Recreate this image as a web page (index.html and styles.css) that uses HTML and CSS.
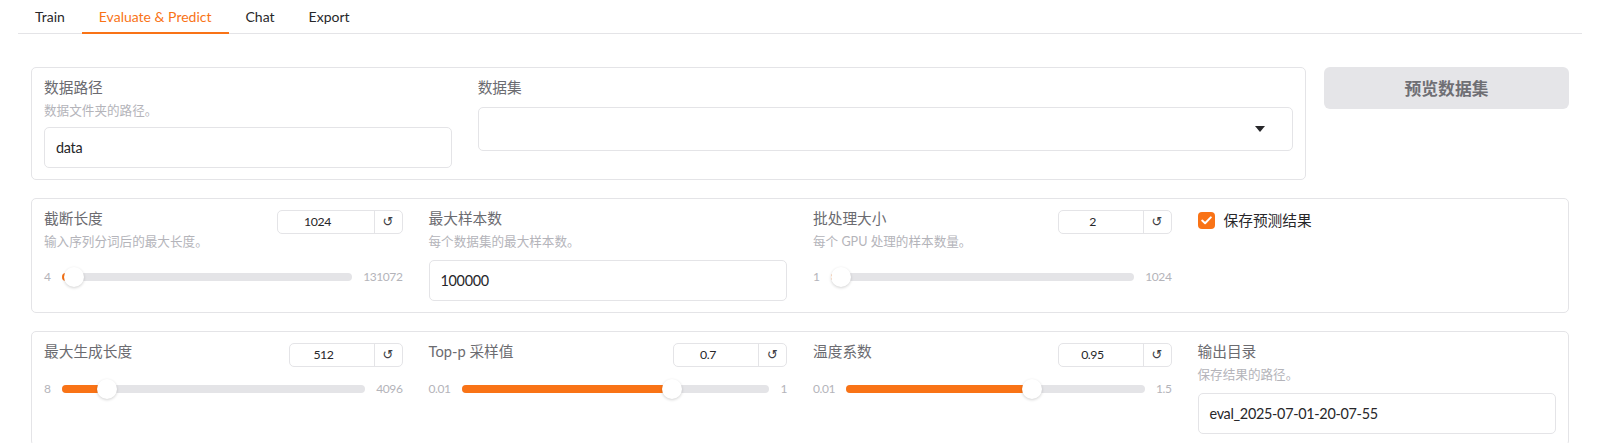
FILE: index.html
```html
<!DOCTYPE html>
<html lang="zh">
<head>
<meta charset="utf-8">
<title>Evaluate &amp; Predict</title>
<link rel="stylesheet" href="styles.css">
</head>
<body>
<div class="app">
  <nav class="tabs">
    <button class="tab">Train</button>
    <button class="tab active">Evaluate &amp; Predict</button>
    <button class="tab">Chat</button>
    <button class="tab">Export</button>
  </nav>

  <main class="panel">
    <div class="row-top">
      <section class="box grid-2">
        <div class="field">
          <div class="head">
            <div class="head-text">
              <span class="label">数据路径</span>
              <div class="info">数据文件夹的路径。</div>
            </div>
          </div>
          <div class="textbox">data</div>
        </div>
        <div class="field">
          <div class="head"><span class="label">数据集</span></div>
          <div class="dropdown">
            <svg class="caret" width="10" height="6" viewBox="0 0 10 6"><path d="M0 0 H10 L5 6 Z" fill="#27272a"/></svg>
          </div>
        </div>
      </section>
      <button class="preview-btn">预览数据集</button>
    </div>

    <section class="box grid-4">
      <div class="field">
        <div class="head">
          <div class="head-text">
            <span class="label">截断长度</span>
            <div class="info">输入序列分词后的最大长度。</div>
          </div>
          <div class="number wide"><span class="num-val">1024</span><span class="reset">↺</span></div>
        </div>
        <div class="slider after-info">
          <span class="bound">4</span>
          <div class="track" style="--f:0.0078"><div class="fill"></div><div class="thumb"></div></div>
          <span class="bound">131072</span>
        </div>
      </div>
      <div class="field">
        <div class="head">
          <div class="head-text">
            <span class="label">最大样本数</span>
            <div class="info">每个数据集的最大样本数。</div>
          </div>
        </div>
        <div class="textbox after-info">100000</div>
      </div>
      <div class="field">
        <div class="head">
          <div class="head-text">
            <span class="label">批处理大小</span>
            <div class="info">每个 GPU 处理的样本数量。</div>
          </div>
          <div class="number"><span class="num-val">2</span><span class="reset">↺</span></div>
        </div>
        <div class="slider after-info">
          <span class="bound">1</span>
          <div class="track" style="--f:0.001"><div class="fill"></div><div class="thumb"></div></div>
          <span class="bound">1024</span>
        </div>
      </div>
      <div class="field">
        <label class="check">
          <span class="checkbox">
            <svg width="11" height="9" viewBox="0 0 11 9"><path d="M1.2 4.6 L4.1 7.3 L9.8 1.4" fill="none" stroke="#fff" stroke-width="2" stroke-linecap="round" stroke-linejoin="round"/></svg>
          </span>
          <span class="check-label">保存预测结果</span>
        </label>
      </div>
    </section>

    <section class="box grid-4">
      <div class="field">
        <div class="head">
          <div class="head-text"><span class="label">最大生成长度</span></div>
          <div class="number"><span class="num-val">512</span><span class="reset">↺</span></div>
        </div>
        <div class="slider">
          <span class="bound">8</span>
          <div class="track" style="--f:0.1233"><div class="fill"></div><div class="thumb"></div></div>
          <span class="bound">4096</span>
        </div>
      </div>
      <div class="field">
        <div class="head">
          <div class="head-text"><span class="label">Top-p 采样值</span></div>
          <div class="number"><span class="num-val">0.7</span><span class="reset">↺</span></div>
        </div>
        <div class="slider">
          <span class="bound">0.01</span>
          <div class="track" style="--f:0.697"><div class="fill"></div><div class="thumb"></div></div>
          <span class="bound">1</span>
        </div>
      </div>
      <div class="field">
        <div class="head">
          <div class="head-text"><span class="label">温度系数</span></div>
          <div class="number"><span class="num-val">0.95</span><span class="reset">↺</span></div>
        </div>
        <div class="slider">
          <span class="bound">0.01</span>
          <div class="track" style="--f:0.631"><div class="fill"></div><div class="thumb"></div></div>
          <span class="bound">1.5</span>
        </div>
      </div>
      <div class="field">
        <div class="head">
          <div class="head-text">
            <span class="label">输出目录</span>
            <div class="info">保存结果的路径。</div>
          </div>
        </div>
        <div class="textbox after-info">eval_2025-07-01-20-07-55</div>
      </div>
    </section>
  </main>
</div>
</body>
</html>
```

FILE: styles.css
```css
* { box-sizing: border-box; }

html, body {
  margin: 0;
  padding: 0;
  background: #ffffff;
}

body {
  font-family: "Lato", "Noto Sans CJK SC", sans-serif;
  color: #27272a;
  overflow: hidden;
}

.app {
  padding: 0 18px;
}

/* Tabs */
.tabs {
  display: flex;
  border-bottom: 1px solid #e4e4e7;
  height: 34px;
}

.tab {
  font-family: inherit;
  font-size: 14px;
  color: #27272a;
  background: none;
  border: none;
  padding: 0 17px;
  height: 34px;
  line-height: 33px;
  margin-bottom: -1px;
  border-bottom: 2px solid transparent;
  cursor: pointer;
}

.tab.active {
  color: #f97316;
  border-bottom-color: #f97316;
}

/* Panel */
.panel {
  padding: 33px 13px 0;
  display: flex;
  flex-direction: column;
  gap: 18px;
}

.row-top {
  display: flex;
  gap: 18px;
  align-items: flex-start;
}

.row-top .box {
  flex: 1;
}

.preview-btn {
  width: 245px;
  height: 42px;
  border: none;
  border-radius: 6px;
  background: #e5e5e8;
  color: #6f6f74;
  font-family: inherit;
  font-size: 16.8px;
  font-weight: 700;
}

.box {
  border: 1px solid #e4e4e7;
  border-radius: 5px;
  padding: 10px 12px 11px;
  background: #fff;
}

.grid-2 {
  display: grid;
  grid-template-columns: 1fr 2fr;
  gap: 26px;
}

.grid-4 {
  display: grid;
  grid-template-columns: repeat(4, 1fr);
  gap: 26px;
}

.field {
  display: flex;
  flex-direction: column;
  min-width: 0;
}

.head {
  display: flex;
  justify-content: space-between;
  align-items: flex-start;
}

.head-text {
  display: flex;
  flex-direction: column;
}

.label {
  font-size: 14.7px;
  line-height: 18px;
  color: #6b6b70;
}

.info {
  margin-top: 6px;
  font-size: 12.6px;
  line-height: 18px;
  color: #b4b4ba;
}

.textbox {
  margin-top: 7px;
  height: 41px;
  border: 1px solid #e4e4e7;
  border-radius: 5px;
  padding: 0 11px;
  display: flex;
  align-items: center;
  font-size: 14.4px;
  letter-spacing: -0.3px;
  color: #27272a;
}

.textbox.after-info {
  margin-top: 9px;
}

.dropdown {
  margin-top: 11px;
  height: 44px;
  border: 1px solid #e4e4e7;
  border-radius: 5px;
  display: flex;
  align-items: center;
  justify-content: flex-end;
  padding-right: 27px;
}

/* Number input with reset */
.number {
  margin-top: 1px;
  width: 114px;
  height: 24px;
  border: 1px solid #e4e4e7;
  border-radius: 5px;
  display: flex;
  flex-shrink: 0;
}

.number.wide {
  width: 126px;
}

.num-val {
  flex: 1;
  text-align: center;
  padding-right: 16px;
  font-size: 12.3px;
  letter-spacing: -0.4px;
  line-height: 22px;
  color: #27272a;
}

.reset {
  width: 28px;
  border-left: 1px solid #e4e4e7;
  text-align: center;
  font-family: "DejaVu Sans", sans-serif;
  font-size: 13px;
  line-height: 22px;
  color: #3f3f46;
}

/* Slider */
.slider {
  margin-top: 12px;
  display: flex;
  align-items: center;
  gap: 11px;
  height: 20px;
}

.slider.after-info {
  margin-top: 16px;
}

.bound {
  font-size: 12px;
  letter-spacing: -0.4px;
  line-height: 16px;
  color: #b4b4ba;
}

.track {
  position: relative;
  flex: 1;
  height: 8px;
  border-radius: 4px;
  background: #e4e4e7;
}

.fill {
  height: 100%;
  width: calc(10px + (100% - 20px) * var(--f));
  border-radius: 4px;
  background: #f97316;
}

.thumb {
  position: absolute;
  top: 50%;
  left: calc(10px + (100% - 20px) * var(--f));
  width: 20px;
  height: 20px;
  margin: -10px 0 0 -10px;
  border-radius: 50%;
  background: #fff;
  box-shadow: 0 1px 3px rgba(0, 0, 0, 0.18);
}

/* Checkbox */
.check {
  display: flex;
  align-items: center;
  gap: 9px;
  margin-top: 3px;
}

.checkbox {
  width: 17px;
  height: 17px;
  border-radius: 4px;
  background: #f97316;
  display: flex;
  align-items: center;
  justify-content: center;
}

.check-label {
  font-size: 14.7px;
  line-height: 17px;
  color: #27272a;
}
```
